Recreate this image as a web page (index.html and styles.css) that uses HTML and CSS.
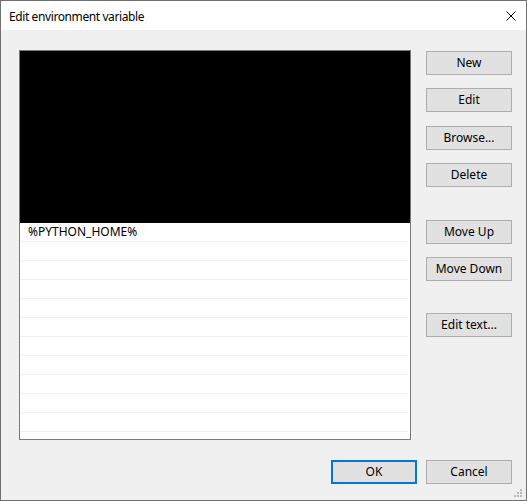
FILE: index.html
```html
<!DOCTYPE html>
<html>
<head>
<meta charset="utf-8">
<link rel="stylesheet" href="styles.css">
</head>
<body>
<div class="window">
  <div class="titlebar">
    <span class="title">Edit environment variable</span>
    <svg class="close" width="10" height="10" viewBox="0 0 10 10"><path d="M0.5 0.5 L9.5 9.5 M9.5 0.5 L0.5 9.5" stroke="#000" stroke-width="1" fill="none"/></svg>
  </div>
  <div class="body">
    <div class="main">
      <div class="list">
        <div class="black"></div>
        <div class="row">%PYTHON_HOME%</div>
        <div class="row"></div>
        <div class="row"></div>
        <div class="row"></div>
        <div class="row"></div>
        <div class="row"></div>
        <div class="row"></div>
        <div class="row"></div>
        <div class="row"></div>
        <div class="row"></div>
        <div class="row"></div>
        <div class="row"></div>
      </div>
      <div class="side">
        <button class="btn b-new">New</button>
        <button class="btn b-edit">Edit</button>
        <button class="btn b-browse">Browse...</button>
        <button class="btn b-delete">Delete</button>
        <button class="btn b-up">Move Up</button>
        <button class="btn b-down">Move Down</button>
        <button class="btn b-text">Edit text...</button>
      </div>
    </div>
    <div class="footer">
      <button class="btn ok">OK</button>
      <button class="btn">Cancel</button>
    </div>
  </div>
  <svg class="grip" width="12" height="12" viewBox="0 0 12 12">
    <g fill="#b8b8b8">
      <rect x="8" y="2" width="2" height="2"/>
      <rect x="5" y="5" width="2" height="2"/>
      <rect x="8" y="5" width="2" height="2"/>
      <rect x="2" y="8" width="2" height="2"/>
      <rect x="5" y="8" width="2" height="2"/>
      <rect x="8" y="8" width="2" height="2"/>
    </g>
  </svg>
</div>
</body>
</html>
```
FILE: styles.css
```css
html, body {
  margin: 0;
  padding: 0;
  background: #f0f0f0;
}
body {
  font-family: "Noto Sans", "Open Sans", sans-serif;
  font-size: 12px;
  color: #000;
}
.window {
  position: relative;
  width: 527px;
  height: 501px;
  box-sizing: border-box;
  border: 1px solid #707070;
  display: flex;
  flex-direction: column;
  background: #f0f0f0;
}
.titlebar {
  height: 29px;
  background: #fff;
  display: flex;
  align-items: center;
  justify-content: space-between;
  padding: 0 10px 0 8px;
  flex: none;
}
.title {
  font-size: 12px;
  letter-spacing: -0.4px;
  color: #000;
  position: relative;
  top: 1px;
}
.close {
  display: block;
}
.body {
  flex: 1;
  padding: 20px 14px 0 18px;
  display: flex;
  flex-direction: column;
}
.main {
  display: flex;
  gap: 15px;
}
.list {
  width: 392px;
  height: 390px;
  box-sizing: border-box;
  border: 1px solid #7a7a7a;
  background: #fff;
  overflow: hidden;
}
.black {
  height: 172px;
  background: #000;
}
.row {
  height: 18px;
  border-bottom: 1px solid #f0f0f0;
  padding-left: 8px;
  line-height: 18px;
  margin-right: 2px;
  white-space: nowrap;
}
.side {
  display: flex;
  flex-direction: column;
  width: 86px;
  padding-top: 1px;
}
.btn {
  width: 86px;
  height: 24px;
  box-sizing: border-box;
  border: 1px solid #adadad;
  background: #e1e1e1;
  font-family: "Noto Sans", "Open Sans", sans-serif;
  font-size: 12px;
  color: #000;
  padding: 0;
  margin: 0;
  line-height: 20px;
}
.b-edit { margin-top: 13px; }
.b-browse { margin-top: 14px; }
.b-delete { margin-top: 13px; }
.b-up { margin-top: 33px; }
.b-down { margin-top: 13px; }
.b-text { margin-top: 32px; }
.footer {
  display: flex;
  justify-content: flex-end;
  gap: 9px;
  margin-top: 20px;
}
.ok {
  border: 2px solid #0078d7;
}
.grip {
  position: absolute;
  left: 511px;
  top: 486px;
}
```
